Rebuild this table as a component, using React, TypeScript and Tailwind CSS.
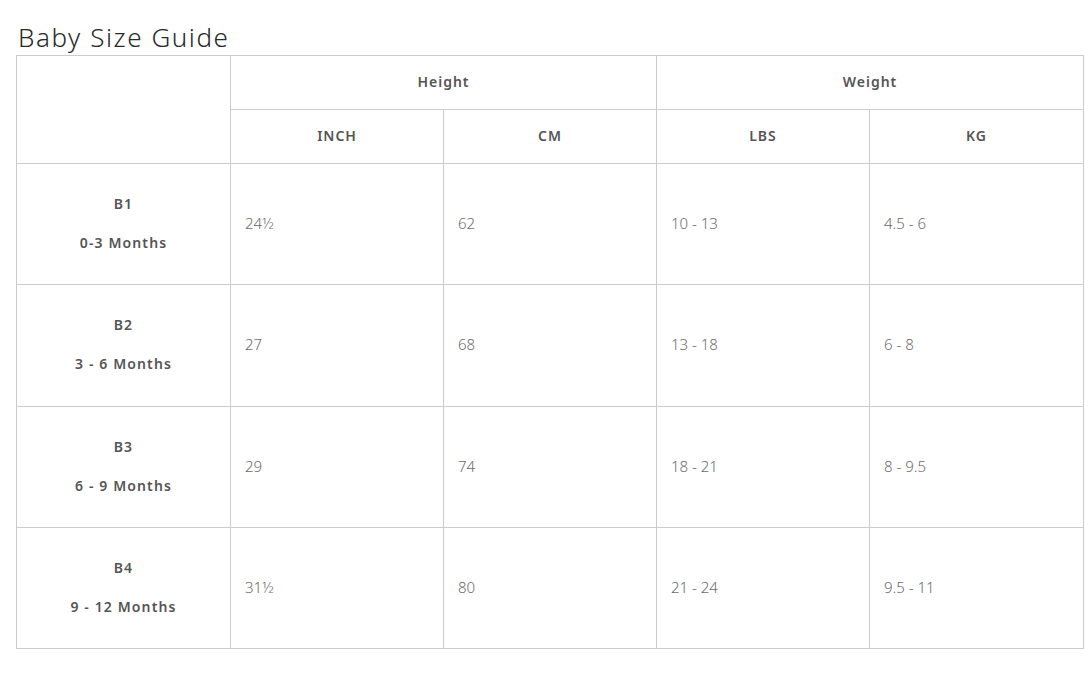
const ROWS = [
  { code: "B1", age: "0-3 Months", inch: "24½", cm: "62", lbs: "10 - 13", kg: "4.5 - 6", h: "h-[121px]" },
  { code: "B2", age: "3 - 6 Months", inch: "27", cm: "68", lbs: "13 - 18", kg: "6 - 8", h: "h-[122px]" },
  { code: "B3", age: "6 - 9 Months", inch: "29", cm: "74", lbs: "18 - 21", kg: "8 - 9.5", h: "h-[121px]" },
  { code: "B4", age: "9 - 12 Months", inch: "31½", cm: "80", lbs: "21 - 24", kg: "9.5 - 11", h: "h-[121px]" },
];

const font = { fontFamily: '"Noto Sans", "Open Sans", Arial, sans-serif' };

export default function App() {
  const head =
    "border border-[#cccccc] pb-[2px] text-center text-[14px] font-semibold tracking-[0.07em] text-[#555555]";
  const cell =
    "border border-[#cccccc] pb-[2px] pl-[14px] text-left align-middle text-[15px] font-light text-[#6b6b6b]";

  return (
    <div className="min-h-[695px] bg-white pl-4 pr-[4px]" style={font}>
      <h1 className="h-[55px] pl-[2px] pt-[20px] text-[26px] font-light leading-[34px] tracking-[0.06em] text-[#2a2a2a]">
        Baby Size Guide
      </h1>
      <table className="w-[1068px] table-fixed border-collapse">
        <colgroup>
          <col className="w-[214px]" />
          <col className="w-[213px]" />
          <col className="w-[213px]" />
          <col className="w-[213px]" />
          <col className="w-[214px]" />
        </colgroup>
        <thead>
          <tr className="h-[54px]">
            <th rowSpan={2} className="border border-[#cccccc]" />
            <th colSpan={2} className={head}>
              Height
            </th>
            <th colSpan={2} className={head}>
              Weight
            </th>
          </tr>
          <tr className="h-[54px]">
            <th className={head}>INCH</th>
            <th className={head}>CM</th>
            <th className={head}>LBS</th>
            <th className={head}>KG</th>
          </tr>
        </thead>
        <tbody>
          {ROWS.map((r) => (
            <tr key={r.code} className={r.h}>
              <td className="border border-[#cccccc] pb-[2px] text-center text-[14px] font-semibold tracking-[0.08em] text-[#555555]">
                <div className="leading-[20px]">{r.code}</div>
                <div className="mt-[19px] leading-[20px]">{r.age}</div>
              </td>
              <td className={cell}>{r.inch}</td>
              <td className={cell}>{r.cm}</td>
              <td className={cell}>{r.lbs}</td>
              <td className={cell}>{r.kg}</td>
            </tr>
          ))}
        </tbody>
      </table>
    </div>
  );
}
